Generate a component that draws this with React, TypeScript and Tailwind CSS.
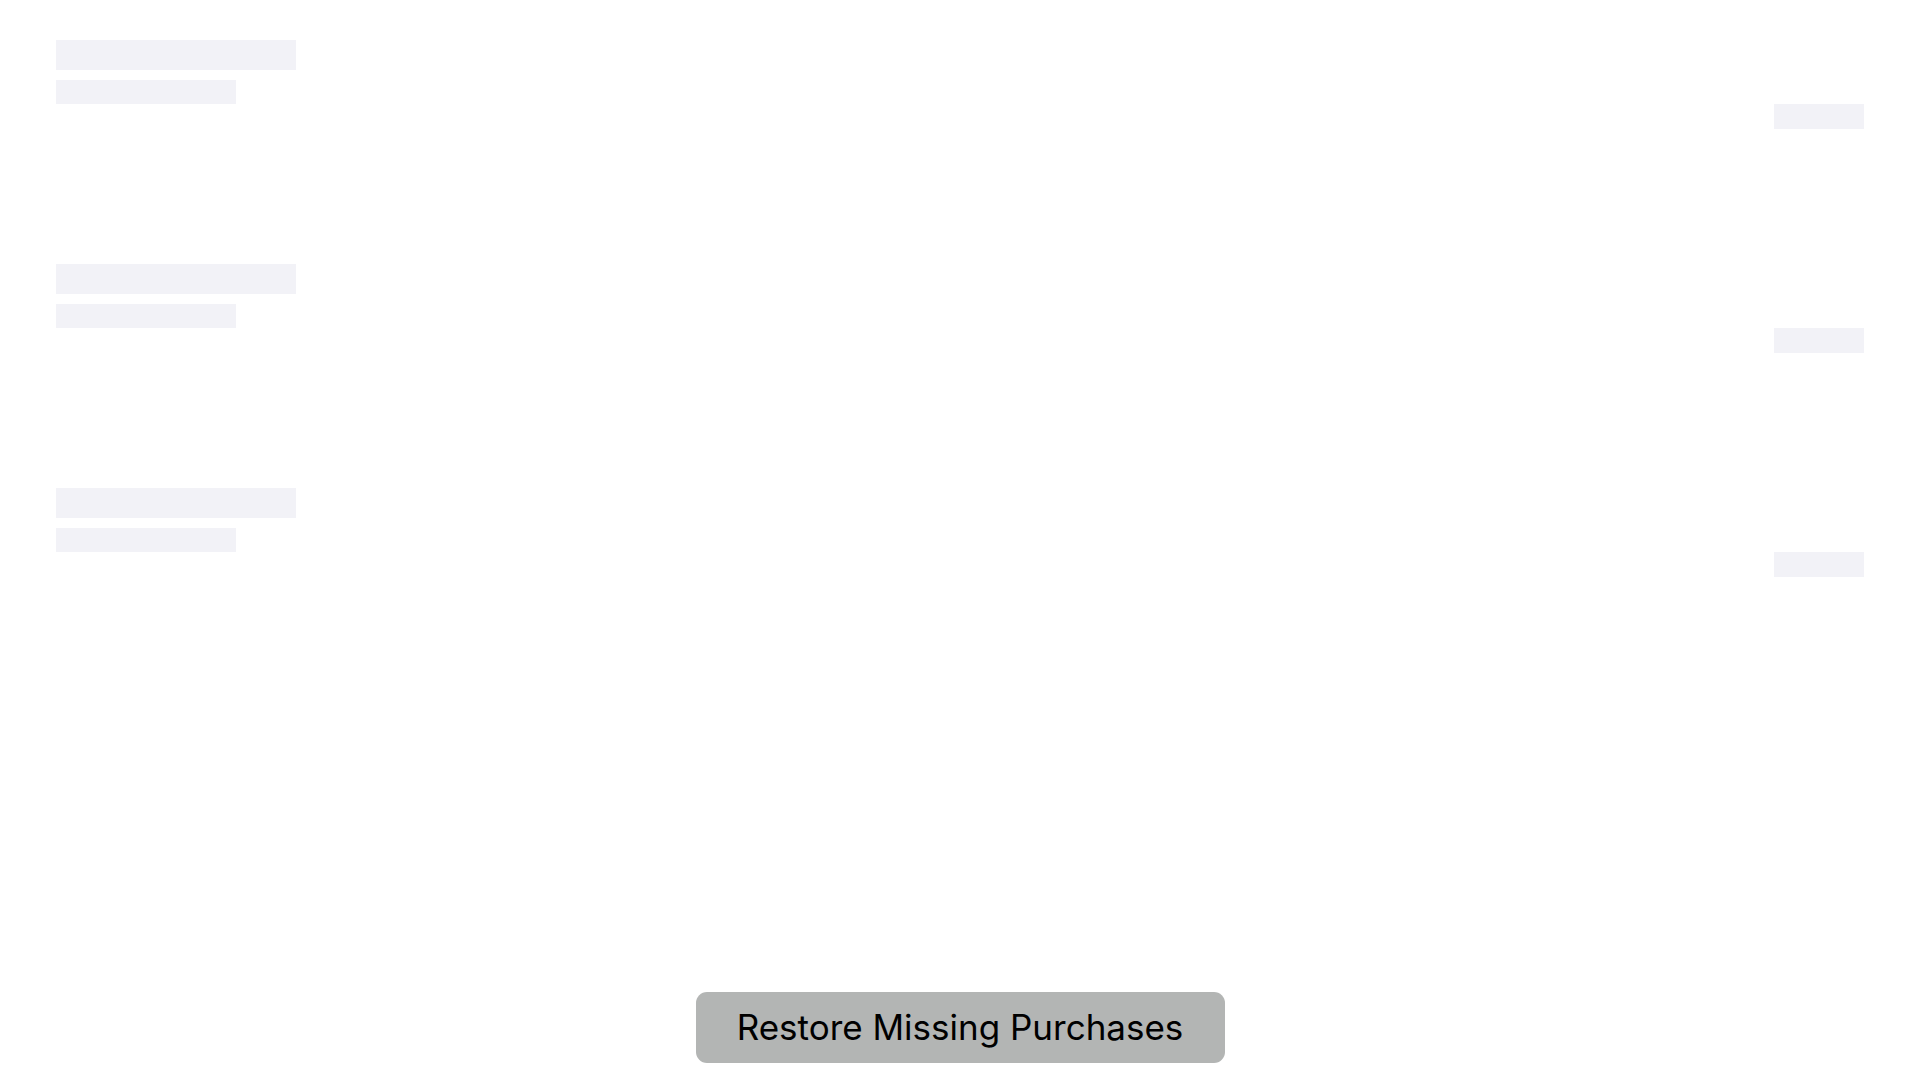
import React from "react";

function SkeletonRow() {
  return (
    <div className="h-[224px] px-14 pt-10 flex justify-between">
      <div className="flex flex-col gap-[10px]">
        <div className="w-[240px] h-[30px] bg-[#f2f2f7]" />
        <div className="w-[180px] h-[24px] bg-[#f2f2f7]" />
      </div>
      <div className="pt-16">
        <div className="w-[90px] h-[25px] bg-[#f2f2f7]" />
      </div>
    </div>
  );
}

export default function App() {
  return (
    <div
      className="h-screen bg-white flex flex-col"
      style={{ fontFamily: "Inter, 'Noto Sans', sans-serif" }}
    >
      <div className="flex-1">
        {[1, 2, 3].map((i) => (
          <SkeletonRow key={i} />
        ))}
      </div>
      <div className="flex justify-center pb-[17px]">
        <button className="w-[529px] h-[71px] rounded-[11px] bg-[#b3b5b4] text-black text-[35px] leading-none flex items-center justify-center">
          Restore Missing Purchases
        </button>
      </div>
    </div>
  );
}
